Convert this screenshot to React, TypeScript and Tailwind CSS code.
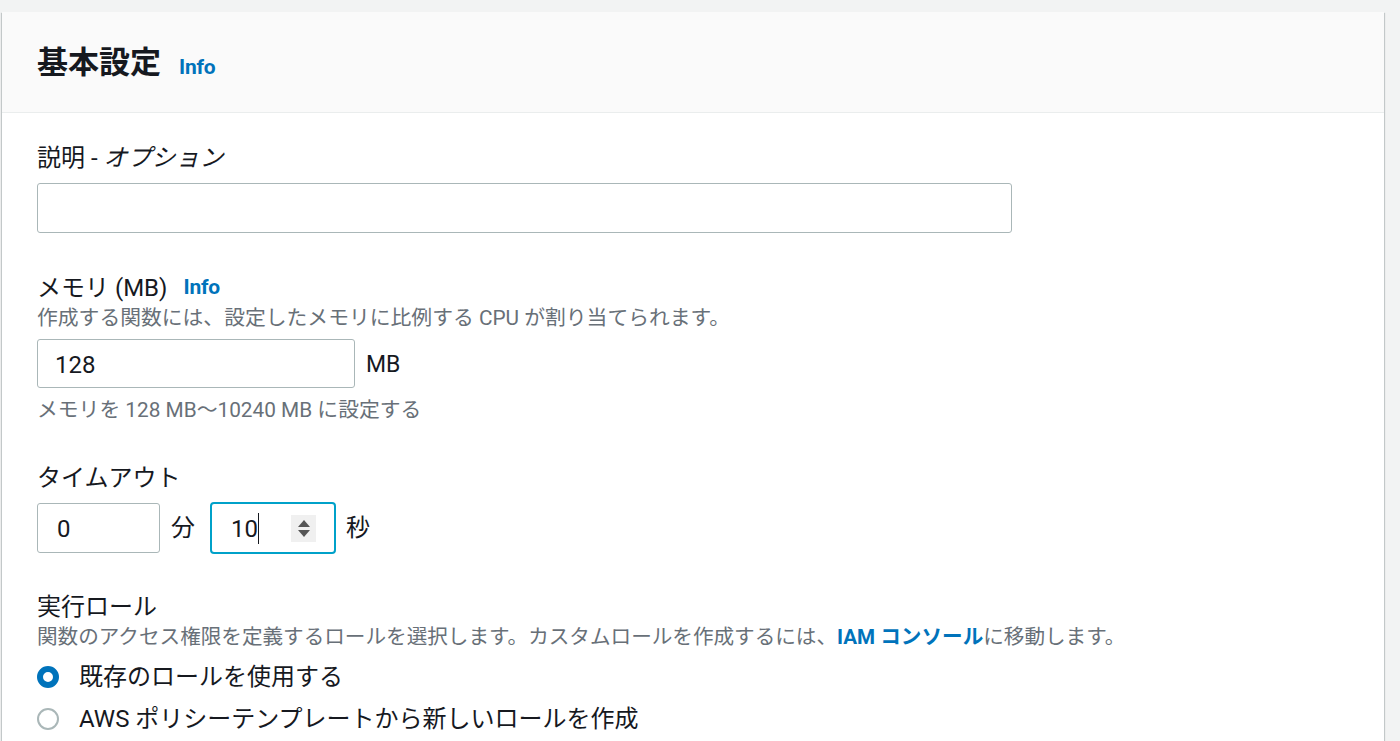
import React from "react";

const font = {
  fontFamily: '"Roboto", "Noto Sans CJK JP", sans-serif',
};

function Info() {
  return (
    <span className="font-bold text-[21px] text-[#0073bb] tracking-[-0.2px]">
      Info
    </span>
  );
}

function Radio({ checked, label }: { checked?: boolean; label: string }) {
  return (
    <label className="flex items-center h-[30px] gap-[20px]">
      {checked ? (
        <span className="w-[22px] h-[22px] rounded-full border-[6px] border-[#0073bb] bg-white box-border" />
      ) : (
        <span className="w-[22px] h-[22px] rounded-full border-2 border-[#aab7b8] bg-white box-border" />
      )}
      <span className="text-[24px] text-[#16191f]">{label}</span>
    </label>
  );
}

export default function App() {
  return (
    <div className="min-h-screen bg-[#f2f3f3] pt-[12px] pr-[16px]" style={font}>
      <div className="ml-[2px] bg-white shadow-[0_1px_1px_0_rgba(0,28,36,0.3),1px_1px_1px_0_rgba(0,28,36,0.15),-1px_1px_1px_0_rgba(0,28,36,0.15)] min-h-[760px]">
        <div className="h-[101px] bg-[#fafafa] border-b border-[#eaeded] px-[35px] flex items-center gap-[18px]">
          <h2 className="text-[31px] font-bold text-[#16191f] leading-none">
            基本設定
          </h2>
          <span className="mt-[9px] text-[22px]">
            <Info />
          </span>
        </div>

        <div className="px-[35px] pt-[30px]">
          {/* 説明 */}
          <div className="h-[30px] leading-[30px] text-[24px] text-[#16191f]">
            説明 - <span className="italic">オプション</span>
          </div>
          <div className="mt-[10px] w-[975px] h-[50px] border border-[#aab7b8] rounded-[3px] bg-white" />

          {/* メモリ */}
          <div className="mt-[40px] h-[30px] flex items-center gap-[16px] text-[24px] text-[#16191f]">
            <span>メモリ (MB)</span>
            <Info />
          </div>
          <div className="mt-[2px] h-[26px] leading-[26px] text-[20.8px] text-[#687078]">
            作成する関数には、設定したメモリに比例する CPU が割り当てられます。
          </div>
          <div className="mt-[8px] flex items-center gap-[11px]">
            <div className="w-[318px] h-[49px] border border-[#aab7b8] rounded-[3px] flex items-center pl-[17px] pt-[3px] text-[24px] text-[#16191f]">
              128
            </div>
            <span className="pt-[4px] text-[23px] text-[#16191f]">MB</span>
          </div>
          <div className="mt-[9px] h-[26px] leading-[26px] text-[20.8px] text-[#687078]">
            メモリを 128 MB〜10240 MB に設定する
          </div>

          {/* タイムアウト */}
          <div className="mt-[40px] h-[30px] leading-[30px] text-[24px] text-[#16191f]">
            タイムアウト
          </div>
          <div className="mt-[9px] flex items-center h-[52px]">
            <div className="w-[123px] h-[50px] border border-[#aab7b8] rounded-[3px] flex items-center pl-[19px] pt-[2px] text-[24px] text-[#16191f]">
              0
            </div>
            <span className="ml-[11px] text-[24px] text-[#16191f]">分</span>
            <div className="ml-[15px] w-[126px] h-[52px] border-2 border-[#00a1c9] rounded-[4px] flex items-center pl-[19px] pr-[18px] text-[24px] text-[#16191f]">
              <span className="pt-[2px]">10</span>
              <span className="w-[1.5px] h-[31px] bg-[#16191f]" />
              <span className="ml-auto w-[25px] h-[27px] bg-[#f0f0f0] flex flex-col items-center justify-center gap-[3px]">
                <svg width="12" height="7" viewBox="0 0 12 7">
                  <path d="M6 0 L12 7 H0 Z" fill="#555" />
                </svg>
                <svg width="12" height="7" viewBox="0 0 12 7">
                  <path d="M0 0 H12 L6 7 Z" fill="#555" />
                </svg>
              </span>
            </div>
            <span className="ml-[10px] text-[24px] text-[#16191f]">秒</span>
          </div>

          {/* 実行ロール */}
          <div className="mt-[38px] h-[30px] leading-[30px] text-[24px] text-[#16191f]">
            実行ロール
          </div>
          <div className="mt-[2px] h-[26px] leading-[26px] text-[20.6px] text-[#687078]">
            関数のアクセス権限を定義するロールを選択します。カスタムロールを作成するには、
            <span className="font-bold text-[#0073bb]">IAM コンソール</span>
            に移動します。
          </div>
          <div className="mt-[12px] flex flex-col gap-[12px]">
            <Radio checked label="既存のロールを使用する" />
            <Radio label="AWS ポリシーテンプレートから新しいロールを作成" />
          </div>
        </div>
      </div>
    </div>
  );
}
